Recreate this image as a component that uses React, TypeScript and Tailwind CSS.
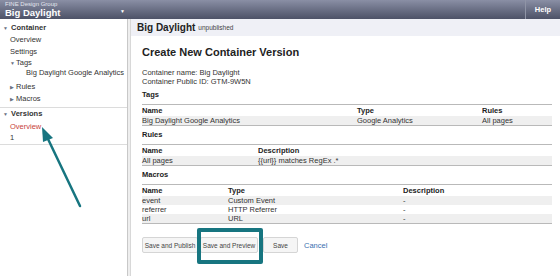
import React from "react"

const font = { fontFamily: '"Liberation Sans", Arial, sans-serif' }

function Caret({ open }: { open: boolean }) {
  return (
    <span className="inline-block w-[6px] text-[5px] text-gray-500 leading-none align-middle">{open ? "▼" : "▶"}</span>
  )
}

function SectionLabel({ children }: { children: React.ReactNode }) {
  return <div className="font-bold pt-[4px] pb-[5px] leading-[9px] text-[#222]">{children}</div>
}

function DataTable({ cols, widths, rows }: { cols: string[]; widths: string[]; rows: string[][] }) {
  return (
    <div className="border-t border-b border-[#b9b9b9]">
      <div className="flex h-[11px] items-center font-bold text-[#222]">
        {cols.map((c, i) => (
          <div key={c} className={widths[i]}>{c}</div>
        ))}
      </div>
      {rows.map((r, ri) => (
        <div key={ri} className={`flex h-[9px] items-center ${ri % 2 === 0 ? "bg-[#efefef]" : "bg-white"}`}>
          {r.map((v, i) => (
            <div key={i} className={widths[i]}>{v}</div>
          ))}
        </div>
      ))}
    </div>
  )
}

export default function App() {
  return (
    <div className="relative w-[560px] h-[276px] overflow-hidden bg-white text-[#333]" style={font}>
      {/* Top bar */}
      <div className="flex h-[19px] bg-gradient-to-b from-[#8a8fa5] to-[#4d5267] text-white">
        <div className="w-[128px] pl-[5px] pt-[1px] flex items-start justify-between pr-[3px]">
          <div className="leading-none">
            <div className="text-[6px] text-[#e4e6ee]">FINE Design Group</div>
            <div className="text-[9.5px] font-bold mt-[1px]">Big Daylight</div>
          </div>
          <span className="text-[5px] mt-[7px]">▼</span>
        </div>
        <div className="flex-1" />
        <div className="w-[35px] border-l border-[#8f94a6] flex items-start justify-center pt-[4px] text-[7.5px] font-bold">Help</div>
      </div>

      <div className="flex h-[257px]">
        {/* Sidebar */}
        <div className="w-[128px] border-r border-[#c8c8c8] text-[7.5px] whitespace-nowrap">
          <div className="mt-[3px] h-[12px] leading-[12px] pl-[3px] font-bold text-[#333]"><Caret open /> Container</div>
          <div className="h-[12px] leading-[12px] pl-[10px]">Overview</div>
          <div className="h-[12px] leading-[12px] pl-[10px]">Settings</div>
          <div className="h-[9px] leading-[9px] pl-[10px]"><Caret open />Tags</div>
          <div className="h-[12px] leading-[12px] pl-[26px]">Big Daylight Google Analytics</div>
          <div className="mt-[2px] h-[12px] leading-[12px] pl-[10px]"><Caret open={false} />Rules</div>
          <div className="h-[12px] leading-[12px] pl-[10px] mb-[2px]"><Caret open={false} />Macros</div>
          <div className="border-t border-[#dcdcdc]">
            <div className="h-[12px] leading-[12px] pl-[3px] font-bold"><Caret open /> Versions</div>
            <div className="mt-[1px] h-[12px] leading-[12px] pl-[10px] text-[#c8423b]">Overview</div>
            <div className="h-[10px] leading-[10px] pl-[10px] mb-[1px]">1</div>
          </div>
          <div className="border-t border-[#dcdcdc]" />
        </div>
        <div className="w-[3px] bg-[#eeeeee] border-r border-[#d8d8d8]" />

        {/* Main */}
        <div className="flex-1 flex flex-col">
          <div className="h-[17px] bg-[#eff0f6] flex items-center pl-[6px]">
            <span className="text-[10px] font-bold text-[#222]">Big Daylight</span>
            <span className="text-[6.5px] ml-[3px] text-[#444]">unpublished</span>
          </div>
          <div className="pl-[11px] pr-[8px] text-[7.5px] leading-[9px]">
            <div className="text-[11px] font-bold text-[#222] mt-[10px] mb-[10px] leading-[12px]">Create New Container Version</div>
            <div>Container name: Big Daylight</div>
            <div>Container Public ID: GTM-9W5N</div>
            <SectionLabel>Tags</SectionLabel>
            <DataTable
              cols={["Name", "Type", "Rules"]}
              widths={["w-[215px]", "w-[125px]", "flex-1"]}
              rows={[["Big Daylight Google Analytics", "Google Analytics", "All pages"]]}
            />
            <SectionLabel>Rules</SectionLabel>
            <DataTable
              cols={["Name", "Description"]}
              widths={["w-[116px]", "flex-1"]}
              rows={[["All pages", "{{url}} matches RegEx .*"]]}
            />
            <SectionLabel>Macros</SectionLabel>
            <DataTable
              cols={["Name", "Type", "Description"]}
              widths={["w-[86px]", "w-[175px]", "flex-1"]}
              rows={[
                ["event", "Custom Event", "-"],
                ["referrer", "HTTP Referrer", "-"],
                ["url", "URL", "-"],
              ]}
            />
            <div className="flex items-center mt-[13px] text-[6.5px] text-[#444]">
              <button className="h-[16px] w-[56px] border border-[#d5d5d5] rounded-[2px] bg-[#f5f5f5]">Save and Publish</button>
              <div className="relative ml-[2px]">
                <button className="h-[16px] w-[58px] border border-[#d5d5d5] rounded-[2px] bg-[#f5f5f5]">Save and Preview</button>
                <div className="absolute left-[-3px] top-[-9px] w-[66px] h-[36px] border-[4px] border-[#177580] rounded-[2px]" />
              </div>
              <button className="ml-[5px] h-[16px] w-[35px] border border-[#d5d5d5] rounded-[2px] bg-[#f5f5f5]">Save</button>
              <span className="ml-[6px] text-[7.5px] text-[#3a6fb0]">Cancel</span>
            </div>
          </div>
        </div>
      </div>

      {/* Annotation arrow */}
      <svg className="absolute left-0 top-0 pointer-events-none" width="560" height="276">
        <line x1="80" y1="206" x2="48" y2="139" stroke="#177580" strokeWidth="2.5" strokeLinecap="round" />
        <polygon points="42,127 53,138 43,142" fill="#177580" />
      </svg>
    </div>
  )
}
